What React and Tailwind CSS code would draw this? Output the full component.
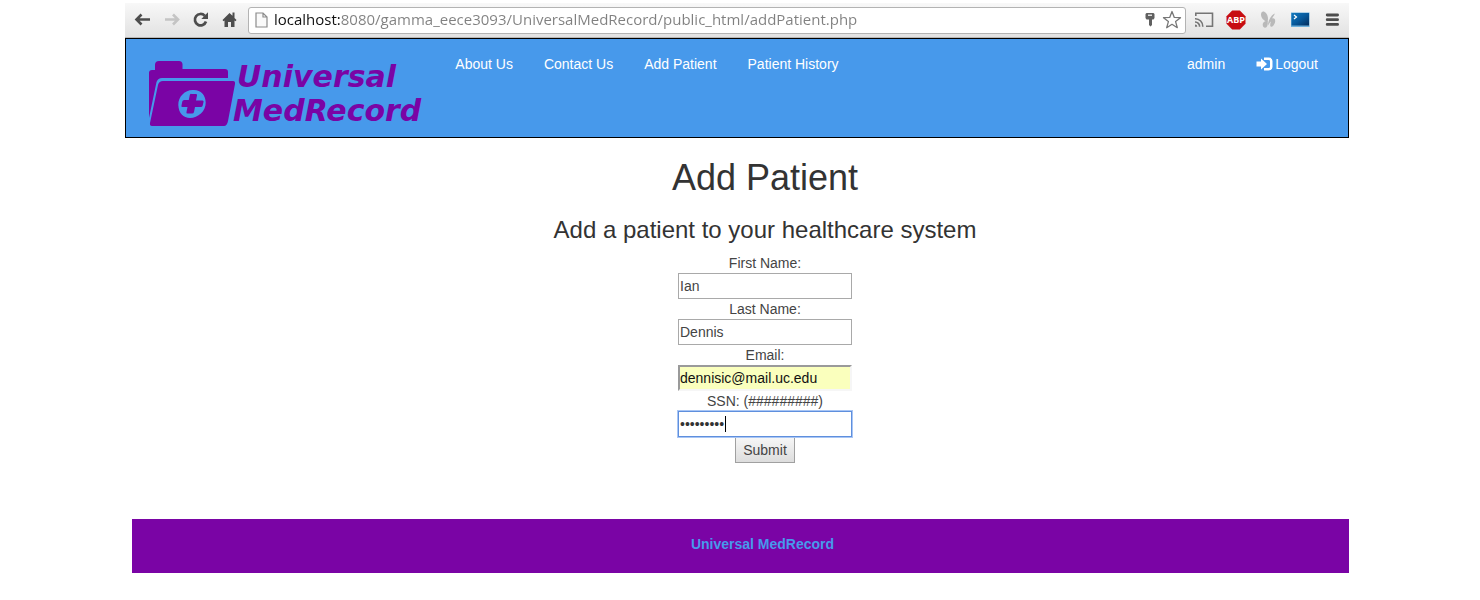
import React from "react";

const navLinks = ["About Us", "Contact Us", "Add Patient", "Patient History"];

const iconButton = "flex shrink-0 items-center justify-center";

function BrowserBar() {
  return (
    <div className="flex h-[35px] items-center border-b border-[#b8b8b8] bg-linear-to-b from-[#f8f8f8] to-[#e2e2e2] pl-2">
      <div className="flex items-center gap-[9px]">
        <button aria-label="Back" className={iconButton}>
          <svg width="20" height="20" viewBox="0 0 20 20" fill="none" stroke="#4d4d4d" strokeWidth="2.6">
            <path d="M17 9.500H3.500M8.500 4.500L3.500 9.500l5 5" />
          </svg>
        </button>
        <button aria-label="Forward" className={iconButton}>
          <svg width="20" height="20" viewBox="0 0 20 20" fill="none" stroke="#c4c4c4" strokeWidth="2.6">
            <path d="M3 9.500h13M11 4.500l5 5-5 5" />
          </svg>
        </button>
        <button aria-label="Reload" className={iconButton}>
          <svg width="20" height="20" viewBox="0 0 20 20">
            <path d="M13.700 5.700A5.700 5.700 0 1 0 15 11.500" fill="none" stroke="#4d4d4d" strokeWidth="2.7" />
            <path d="M17 2.300v6.700h-6.700z" fill="#4d4d4d" />
          </svg>
        </button>
        <button aria-label="Home" className={iconButton}>
          <svg width="20" height="20" viewBox="0 0 20 20" fill="#4d4d4d">
            <path d="M9.500 3L2.500 10l1 1.200L4.500 10.500V17H8v-5h3v5h3.500v-6.500l1 .7 1-1.200-2-2V2.500h-2v3.300z" />
          </svg>
        </button>
      </div>
      <div className="ml-2 flex h-[27px] min-w-0 flex-1 items-center rounded-[3px] border border-[#b3b3b3] bg-white pr-[3px] pl-[6px]">
        <svg className="shrink-0" width="13" height="16" viewBox="0 0 13 16" fill="#fafafa" stroke="#8c8c8c" strokeWidth="1.2">
          <path d="M1 1h7l4 4v10H1zM8 1v4h4" />
        </svg>
        <input
          type="text"
          aria-label="Address"
          defaultValue="localhost:8080/gamma_eece3093/UniversalMedRecord/public_html/addPatient.php"
          className="ml-[6px] h-6 min-w-0 flex-1 bg-linear-to-r from-[#111111] from-[66px] to-[#808080] to-[66px] bg-clip-text pb-[2px] font-['Open_Sans',sans-serif] text-[15px] text-transparent outline-none"
        />
        <svg className="shrink-0" width="12" height="16" viewBox="0 0 12 16">
          <path d="M2.500 1h7l1 1v4l-1 1.500H8V13l-1.500 1.500L5 13V7.500H2.500L1.500 6V2z" fill="#606060" />
          <path d="M4 3.200h4" stroke="#fff" strokeWidth="1.2" />
        </svg>
        <button aria-label="Bookmark this page" className="ml-[6px] shrink-0">
          <svg width="20" height="20" viewBox="0 0 20 20" fill="#fff" stroke="#777" strokeWidth="1.3" strokeLinejoin="round">
            <path d="M10 1.500l2.300 5.900 6.200.3-4.900 3.900 1.700 6.100L10 14.300l-5.300 3.400 1.700-6.100-4.900-3.900 6.200-.3z" />
          </svg>
        </button>
      </div>
      <div className="mr-[7px] ml-2 flex items-center gap-3">
        <button aria-label="Cast" className={iconButton}>
          <svg width="20" height="20" viewBox="0 0 20 20" fill="none" stroke="#757575" strokeWidth="1.6">
            <path d="M1.800 6V3.300h16.700v13H12" />
            <path d="M1 8.800A7.500 7.500 0 0 1 8.800 16.800M1 12a4.500 4.500 0 0 1 4.600 4.800" />
            <path d="M1 14.500a2.300 2.300 0 0 1 2.300 2.300H1z" fill="#757575" stroke="none" />
          </svg>
        </button>
        <button aria-label="Adblock Plus" className={iconButton}>
          <svg width="20" height="20" viewBox="0 0 20 20">
            <path d="M6.200.5h7.600l5.700 5.700v7.600l-5.700 5.700H6.200L.5 13.800V6.200z" fill="#c70d12" />
            <text x="10" y="13" textAnchor="middle" fontSize="9" fontWeight="700" fontFamily="Open Sans, sans-serif" fill="#fff">ABP</text>
          </svg>
        </button>
        <button aria-label="Butterfly extension" className={iconButton}>
          <svg width="20" height="20" viewBox="0 0 20 20" fill="#b9b9b9">
            <path d="M9.500 12C6 11 3 8 3 4.500 3 1 6 .5 8 3c2 2.500 2.500 5.500 1.500 9z" />
            <path d="M9.500 11c-3-.5-5 1.500-4.800 4 .3 3 3 3.500 4.300 1.500.8-1.500 1-3.500.5-5.500z" />
            <path d="M10 15.500c0-4.500 2.500-9.500 6.500-12 .5 1-1 2.500-2.500 5 2.500-1 3.700 1 3 4-.7 2.700-3 5-4.300 4-.9-.8-.5-3 .3-5-1.300 1-2 2.500-3 4z" />
          </svg>
        </button>
        <button aria-label="Remote desktop" className={iconButton}>
          <svg width="20" height="20" viewBox="0 0 20 20">
            <defs>
              <linearGradient id="screen" x1="0" y1="0" x2="1" y2="1">
                <stop offset="0" stopColor="#1379bd" />
                <stop offset=".5" stopColor="#075a9d" />
                <stop offset="1" stopColor="#032c5c" />
              </linearGradient>
            </defs>
            <path d="M1 2.500h18.500v14.500H1z" fill="#6db0dc" />
            <path d="M1.500 3h17.500v12.500H1.500z" fill="url(#screen)" />
            <path d="M4 5l2.500 2L4 9" fill="none" stroke="#fff" strokeWidth="1.2" />
          </svg>
        </button>
        <button aria-label="Menu" className={iconButton}>
          <svg width="20" height="20" viewBox="0 0 20 20" fill="none" stroke="#4d4d4d" strokeWidth="2.8" strokeLinecap="round">
            <path d="M5.200 5h10.400M5.200 9.700h10.400M5.200 14.400h10.400" />
          </svg>
        </button>
      </div>
    </div>
  );
}

function Logo() {
  return (
    <a href="#home" className="flex shrink-0 items-start pt-[21px] text-[#7a04a5]">
      <svg width="88" height="68" viewBox="0 0 88 68" fill="#7a04a5">
        <path d="M1 58V13q0-3 3-3h3V5q0-4 4-4h20q3 0 3.500 3v5H77q3 0 3 3v6H14q-4 0-5.500 4z" />
        <path
          fillRule="evenodd"
          d="M15 21h70q2.500 0 2 3l-7 37q-1 5-4 5H4q-2.500 0-2-3l8-38q1-4 5-4zM46 30C38 29 30 36 30.300 45c.3 8 5 13 11.700 13C50 58 58 51 57.700 42.500 57.500 35 53 30 46 30z"
        />
        <path d="M43 34h5q1.500 0 1 1.500L48 40.500h6.500q1.500 0 1 1.500l-.8 3.500q-.4 1.500-2 1.500H47l-1 5q-.3 1.500-2 1.500h-4.500q-1.500 0-1-1.500l1-5h-5q-1.500 0-1-1.500l.8-4q.3-1.500 2-1.500h4.500l1-5q.3-1.500 1.700-1.500z" />
      </svg>
      <span className="-ml-[3px] flex flex-col font-['DejaVu_Sans',Verdana,sans-serif] text-[30px] leading-[34px] font-bold italic">
        <span className="pl-1">Universal</span>
        <span>MedRecord</span>
      </span>
    </a>
  );
}

function Header() {
  return (
    <header className="flex h-[100px] items-start border border-black bg-[#4799eb] pr-[30px] pl-[22px]">
      <Logo />
      <nav className="ml-[34px] flex flex-1 items-center gap-[31px] pt-[15px] text-white">
        {navLinks.map((label) => (
          <a key={label} href={"#" + label.toLowerCase().replace(" ", "-")} className="whitespace-nowrap">
            {label}
          </a>
        ))}
        <a href="#account" className="ml-auto">admin</a>
        <a href="#logout" className="flex items-center gap-[2px]">
          <svg width="17" height="14" viewBox="0 0 17 14" fill="#fff">
            <path d="M.5 4.500H5V1.500L11 7l-6 5.500v-3H.5z" />
            <path d="M8 .5h4.500Q16.500.5 16.500 4v6q0 3.500-4 3.500H8V11h4.500q1.500 0 1.500-1V4q0-1-1.500-1H8z" />
          </svg>
          Logout
        </a>
      </nav>
    </header>
  );
}

const plainField = "h-[26px] w-[174px] border border-[#a9a9a9] bg-white px-px text-[#444444] outline-none";

function PatientForm() {
  return (
    <form className="flex flex-col items-center text-[#444444]" onSubmit={(e) => e.preventDefault()}>
      <label htmlFor="first">First Name:</label>
      <input id="first" type="text" defaultValue="Ian" className={plainField} />
      <label htmlFor="last">Last Name:</label>
      <input id="last" type="text" defaultValue="Dennis" className={plainField} />
      <label htmlFor="email">Email:</label>
      <input
        id="email"
        type="email"
        defaultValue="dennisic@mail.uc.edu"
        className="h-[26px] w-[174px] border-2 border-t-[#9a9a9a] border-r-[#f6f6f6] border-b-[#f6f6f6] border-l-[#9a9a9a] bg-[#faffbd] text-[#111111] outline-none"
      />
      <label htmlFor="ssn">SSN: (#########)</label>
      <div className="relative flex">
        <input
          id="ssn"
          type="password"
          defaultValue="123456789"
          className="h-[26px] w-[174px] border border-[#5f8fdd] bg-white px-px text-[#333333] ring-1 ring-[#a9c6f5] outline-none"
        />
        <span className="absolute top-[5px] left-[47px] h-4 w-px bg-black" />
      </div>
      <button
        type="submit"
        className="h-[26px] w-[60px] border border-[#a0a0a0] bg-linear-to-b from-[#f6f6f6] to-[#dddddd]"
      >
        Submit
      </button>
    </form>
  );
}

export default function App() {
  return (
    <div className="bg-white pt-[3px] pr-[131px] pb-[27px] pl-[125px] font-['Liberation_Sans',Arial,sans-serif] text-sm leading-5 text-[#333333]">
      <BrowserBar />
      <Header />
      <main className="pt-5 pl-14 text-center">
        <h1 className="text-[36px] leading-10">Add Patient</h1>
        <h2 className="mt-[19px] mb-[10px] text-2xl leading-[26px]">Add a patient to your healthcare system</h2>
        <PatientForm />
      </main>
      <footer className="mt-14 ml-[7px] bg-[#7a04a5] pt-[15px] pb-[19px] pl-11 text-center font-bold text-[#4799eb]">
        Universal MedRecord
      </footer>
    </div>
  );
}
